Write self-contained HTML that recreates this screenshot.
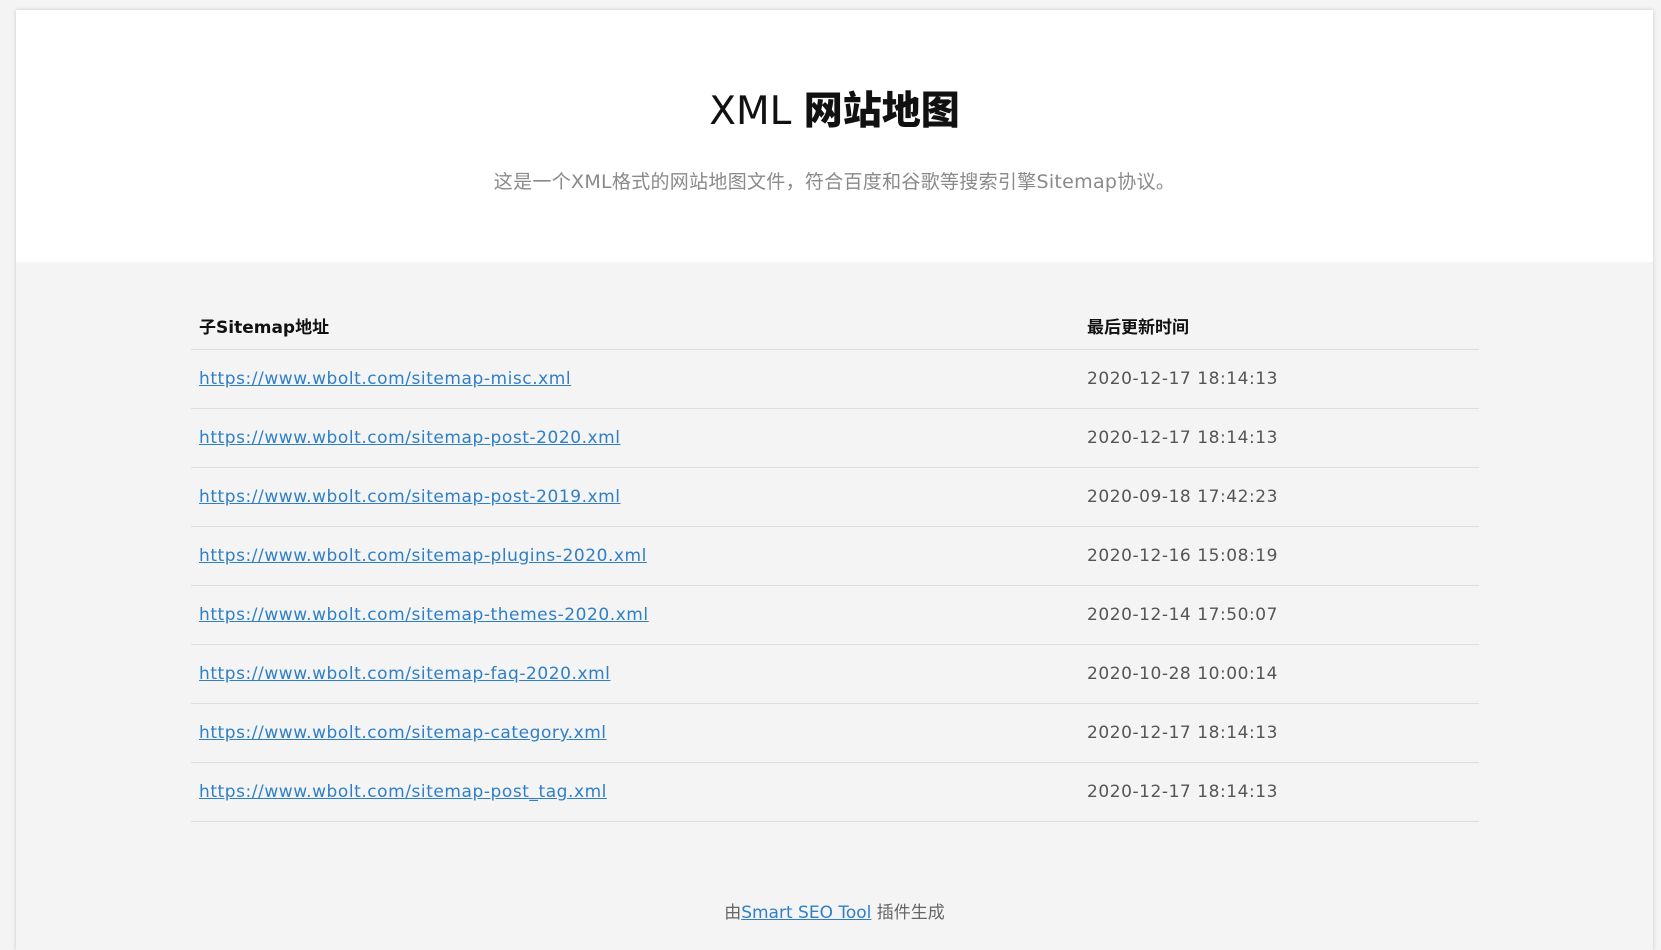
<!DOCTYPE html>
<html><head><meta charset="utf-8"><style>
html,body{margin:0;padding:0;background:#f4f4f4;width:1661px;height:934px;overflow:hidden;font-family:"DejaVu Sans","Noto Sans CJK SC",sans-serif;}
.wrap{position:absolute;left:16px;top:10px;width:1637px;height:940px;background:#f4f4f4;box-shadow:0 0 4px rgba(0,0,0,.18);}
.head{height:252px;background:#fff;text-align:center;}
h1{margin:0;position:absolute;top:70px;left:0;width:100%;text-align:center;font-size:39px;font-weight:normal;color:#111;font-family:"DejaVu Sans","Noto Sans CJK SC",sans-serif;}
h1 b{font-family:"Noto Sans CJK SC",sans-serif;font-weight:900;}
.sub{position:absolute;top:157px;left:0;width:100%;text-align:center;font-size:19px;letter-spacing:0.3px;color:#8a8a8a;}
table{position:absolute;left:175px;top:294px;width:1288px;border-collapse:collapse;}
th{text-align:left;font-size:17px;font-weight:bold;color:#111;height:42px;padding:0 0 3px 8px;border-bottom:1px solid #ddd;vertical-align:middle;font-family:"DejaVu Sans","Noto Sans CJK SC",sans-serif;}
td{height:58px;padding:0 0 0 8px;border-bottom:1px solid #ddd;font-size:17px;letter-spacing:0.55px;color:#555;vertical-align:middle;}
td a{color:#2f7fc7;text-decoration:underline;}
.c2{width:392px;}
.foot{position:absolute;top:888px;left:0;width:100%;text-align:center;font-size:17px;color:#666;}
.foot a{color:#2f7fc7;text-decoration:underline;}
</style></head><body>
<div class="wrap">
<div class="head"></div>
<h1>XML <b>网站地图</b></h1>
<div class="sub">这是一个XML格式的网站地图文件，符合百度和谷歌等搜索引擎Sitemap协议。</div>
<table>
<tr><th>子Sitemap地址</th><th class="c2">最后更新时间</th></tr>
<tr><td><a>https://www.wbolt.com/sitemap-misc.xml</a></td><td>2020-12-17 18:14:13</td></tr>
<tr><td><a>https://www.wbolt.com/sitemap-post-2020.xml</a></td><td>2020-12-17 18:14:13</td></tr>
<tr><td><a>https://www.wbolt.com/sitemap-post-2019.xml</a></td><td>2020-09-18 17:42:23</td></tr>
<tr><td><a>https://www.wbolt.com/sitemap-plugins-2020.xml</a></td><td>2020-12-16 15:08:19</td></tr>
<tr><td><a>https://www.wbolt.com/sitemap-themes-2020.xml</a></td><td>2020-12-14 17:50:07</td></tr>
<tr><td><a>https://www.wbolt.com/sitemap-faq-2020.xml</a></td><td>2020-10-28 10:00:14</td></tr>
<tr><td><a>https://www.wbolt.com/sitemap-category.xml</a></td><td>2020-12-17 18:14:13</td></tr>
<tr><td><a>https://www.wbolt.com/sitemap-post_tag.xml</a></td><td>2020-12-17 18:14:13</td></tr>
</table>
<div class="foot">由<a>Smart SEO Tool</a> 插件生成</div>
</div>
</body></html>
